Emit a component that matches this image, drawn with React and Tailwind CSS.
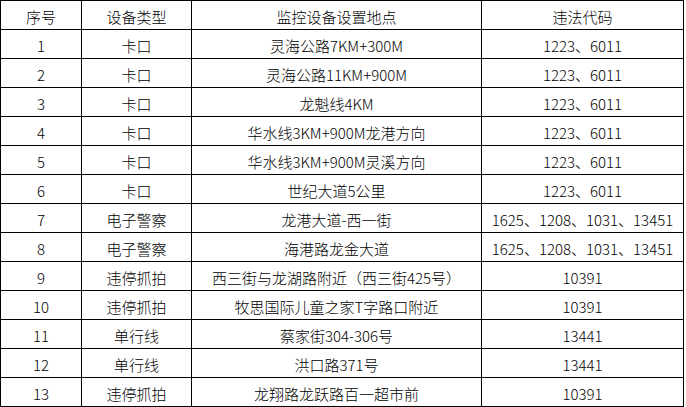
import React from "react";

const rows = [
  ["1", "卡口", "灵海公路7KM+300M", "1223、6011"],
  ["2", "卡口", "灵海公路11KM+900M", "1223、6011"],
  ["3", "卡口", "龙魁线4KM", "1223、6011"],
  ["4", "卡口", "华水线3KM+900M龙港方向", "1223、6011"],
  ["5", "卡口", "华水线3KM+900M灵溪方向", "1223、6011"],
  ["6", "卡口", "世纪大道5公里", "1223、6011"],
  ["7", "电子警察", "龙港大道-西一街", "1625、1208、1031、13451"],
  ["8", "电子警察", "海港路龙金大道", "1625、1208、1031、13451"],
  ["9", "违停抓拍", "西三街与龙湖路附近（西三街425号）", "10391"],
  ["10", "违停抓拍", "牧思国际儿童之家T字路口附近", "10391"],
  ["11", "单行线", "蔡家街304-306号", "13441"],
  ["12", "单行线", "洪口路371号", "13441"],
  ["13", "违停抓拍", "龙翔路龙跃路百一超市前", "10391"],
];

const header = ["序号", "设备类型", "监控设备设置地点", "违法代码"];

function Cell({ children }) {
  return (
    <div className="h-[29px] border-l border-t border-black flex items-center justify-center whitespace-nowrap overflow-hidden pt-[2px]">
      {children}
    </div>
  );
}

export default function App() {
  return (
    <div className="w-[686px] h-[407px] bg-white">
      <div
        className="w-[684px] grid grid-cols-[81px_110px_290px_202px] border-r border-b border-black text-black text-[15px] font-light leading-none"
        style={{ fontFamily: '"Noto Sans CJK SC", "Noto Sans", sans-serif' }}
      >
        {header.map((h) => (
          <Cell key={h}>{h}</Cell>
        ))}
        {rows.map((r) =>
          r.map((c, i) => <Cell key={r[0] + "-" + i}>{c}</Cell>)
        )}
      </div>
    </div>
  );
}
